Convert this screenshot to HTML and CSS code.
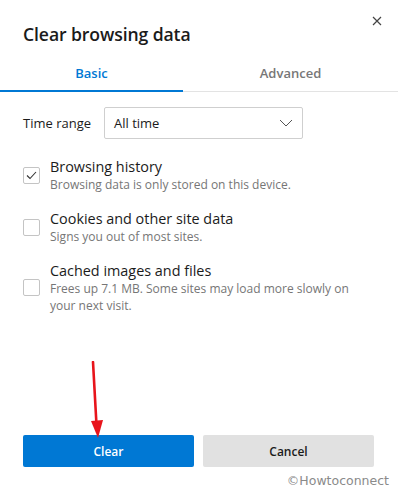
FILE: index.html
```html
<!DOCTYPE html>
<html lang="en">
<head>
    <meta charset="UTF-8">
    <meta name="viewport" content="width=device-width, initial-scale=1.0">
    <title>Clear browsing data</title>
    <link rel="stylesheet" href="styles.css">
</head>
<body>
    <div class="dialog">
        <!-- Header -->
        <div class="dialog-header">
            <h1>Clear browsing data</h1>
            <button class="close-btn" aria-label="Close">
                <svg width="10" height="10" viewBox="0 0 10 10">
                    <path d="M1 1 L9 9 M9 1 L1 9" stroke="#444" stroke-width="1.2" fill="none"/>
                </svg>
            </button>
        </div>

        <!-- Tabs -->
        <div class="tabs">
            <div class="tab active">Basic</div>
            <div class="tab">Advanced</div>
        </div>

        <!-- Time range -->
        <div class="time-range">
            <label>Time range</label>
            <div class="select">
                <span>All time</span>
                <svg width="14" height="8" viewBox="0 0 14 8">
                    <path d="M1 1 L7 7 L13 1" stroke="#555" stroke-width="1" fill="none"/>
                </svg>
            </div>
        </div>

        <!-- Options -->
        <ul class="options">
            <li class="option">
                <span class="checkbox checked">
                    <svg width="11" height="9" viewBox="0 0 11 9">
                        <path d="M1 4.5 L4 7.5 L10 1" stroke="#333" stroke-width="1.1" fill="none"/>
                    </svg>
                </span>
                <div class="option-text">
                    <h4>Browsing history</h4>
                    <p>Browsing data is only stored on this device.</p>
                </div>
            </li>
            <li class="option">
                <span class="checkbox"></span>
                <div class="option-text">
                    <h4>Cookies and other site data</h4>
                    <p>Signs you out of most sites.</p>
                </div>
            </li>
            <li class="option">
                <span class="checkbox"></span>
                <div class="option-text">
                    <h4>Cached images and files</h4>
                    <p>Frees up 7.1 MB. Some sites may load more slowly on your next visit.</p>
                </div>
            </li>
        </ul>

        <!-- Buttons -->
        <div class="actions">
            <button class="btn btn-primary">Clear</button>
            <button class="btn btn-secondary">Cancel</button>
        </div>
        <div class="watermark">&copy;Howtoconnect</div>

        <!-- Red arrow annotation -->
        <svg class="arrow" width="20" height="80" viewBox="0 0 20 80">
            <path d="M5 1 L8.5 64" stroke="#e8141b" stroke-width="2.6" fill="none" stroke-linecap="round"/>
            <path d="M3 60 L15 59 L10 77 Z" fill="#e8141b"/>
        </svg>
    </div>
</body>
</html>
```

FILE: styles.css
```css
body {
    margin: 0;
    padding: 0;
    background: white;
    font-family: "Open Sans", "Noto Sans", sans-serif;
    color: #1b1b1b;
}

.dialog {
    position: relative;
    width: 398px;
    height: 491px;
    box-sizing: border-box;
    display: flex;
    flex-direction: column;
}

/* Header */
.dialog-header {
    display: flex;
    justify-content: space-between;
    align-items: flex-start;
    padding: 0 15px 0 23px;
}

.dialog-header h1 {
    margin: 22px 0 0 0;
    font-size: 17.6px;
    font-weight: 600;
    letter-spacing: -0.1px;
}

.close-btn {
    background: none;
    border: none;
    padding: 0;
    margin-top: 15px;
    width: 12px;
    height: 12px;
    display: flex;
    align-items: center;
    justify-content: center;
}

/* Tabs */
.tabs {
    display: flex;
    margin-top: 16px;
    border-bottom: 1px solid #e3e3e3;
}

.tab {
    text-align: center;
    font-size: 13px;
    font-weight: 600;
    color: #777;
    padding: 2px 0 8px;
    margin-bottom: -1px;
    border-bottom: 2px solid transparent;
}

.tab:first-child {
    width: 183px;
}

.tab:last-child {
    flex-grow: 1;
}

.tab.active {
    color: #0078d4;
    border-bottom-color: #0078d4;
}

/* Time range */
.time-range {
    display: flex;
    align-items: center;
    padding: 0 23px;
    margin-top: 15px;
}

.time-range label {
    font-size: 13px;
    width: 81px;
}

.select {
    width: 199px;
    height: 32px;
    box-sizing: border-box;
    border: 1px solid #cfcfcf;
    border-radius: 2px;
    display: flex;
    align-items: center;
    justify-content: space-between;
    padding: 0 9px 0 9px;
    font-size: 13px;
}

/* Options */
.options {
    list-style: none;
    margin: 18px 0 0 0;
    padding: 0 23px;
}

.option {
    display: flex;
    align-items: center;
    margin-bottom: 16px;
}

.checkbox {
    width: 17px;
    height: 17px;
    box-sizing: border-box;
    border: 1px solid #c4c4c4;
    border-radius: 2px;
    margin-right: 10px;
    flex-shrink: 0;
    display: flex;
    align-items: center;
    justify-content: center;
}

.option-text h4 {
    margin: 0;
    font-size: 14.4px;
    font-weight: 400;
    line-height: 19px;
}

.option-text p {
    margin: 0;
    font-size: 12px;
    color: #767676;
    line-height: 17px;
}

/* Buttons */
.actions {
    display: flex;
    gap: 9px;
    padding: 0 24px 0 23px;
    margin-top: auto;
}

.btn {
    flex: 1;
    height: 32px;
    border: none;
    border-radius: 2px;
    font-family: inherit;
    font-size: 12px;
    font-weight: 600;
}

.btn-primary {
    background-color: #0078d4;
    color: white;
}

.btn-secondary {
    background-color: #e1e1e1;
    color: #1b1b1b;
}

.watermark {
    text-align: right;
    padding: 5px 9px 2px 0;
    font-family: "DejaVu Sans", sans-serif;
    font-size: 12.5px;
    color: #8a8a8a;
    line-height: 17px;
}

/* Annotation */
.arrow {
    position: absolute;
    left: 88px;
    top: 361px;
}
```
